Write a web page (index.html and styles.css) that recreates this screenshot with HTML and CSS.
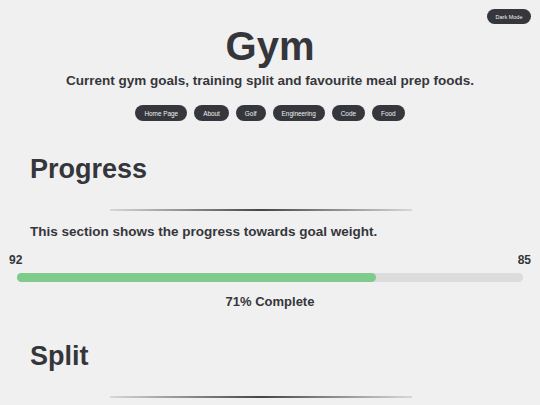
FILE: index.html
```html
<!DOCTYPE html>
<html>
<head>
<meta charset="utf-8">
<link rel="stylesheet" href="styles.css">
</head>
<body>
<div class="topbar"><button class="toggle">Dark Mode</button></div>
<header class="hero">
  <h1 class="title">Gym</h1>
  <p class="subtitle">Current gym goals, training split and favourite meal prep foods.</p>
  <nav class="nav">
    <a class="pill">Home Page</a>
    <a class="pill">About</a>
    <a class="pill">Golf</a>
    <a class="pill">Engineering</a>
    <a class="pill">Code</a>
    <a class="pill">Food</a>
  </nav>
</header>
<section class="section">
  <h2 class="heading">Progress</h2>
  <div class="rule"></div>
  <p class="desc">This section shows the progress towards goal weight.</p>
</section>
<div class="progress">
  <div class="labels"><span>92</span><span>85</span></div>
  <div class="track"><div class="fill" style="width:71%"></div></div>
  <p class="pct">71% Complete</p>
</div>
<section class="section">
  <h2 class="heading split">Split</h2>
  <div class="rule"></div>
</section>
</body>
</html>
```
FILE: styles.css
```css
html, body {
  margin: 0;
  padding: 0;
  background: #f0f0f0;
  color: #35363b;
  font-family: "Liberation Sans", Arial, sans-serif;
}
.topbar {
  display: flex;
  justify-content: flex-end;
  padding: 9px 9px 0 0;
  height: 15px;
}
.toggle {
  height: 15px;
  width: 44px;
  padding: 0;
  border: none;
  border-radius: 8px;
  background: #35373c;
  color: #f0f0f0;
  font-family: "Liberation Sans", Arial, sans-serif;
  font-size: 5.5px;
}
.hero {
  text-align: center;
}
.title {
  margin: 0;
  font-size: 40px;
  line-height: 44px;
  font-weight: bold;
}
.subtitle {
  margin: 5px 0 0;
  font-size: 13.5px;
  line-height: 16px;
  font-weight: bold;
}
.nav {
  display: flex;
  justify-content: center;
  gap: 7px;
  margin-top: 16px;
}
.pill {
  display: flex;
  align-items: center;
  height: 16px;
  padding: 0 9px;
  border-radius: 8px;
  background: #35373c;
  color: #f0f0f0;
  font-size: 6.4px;
}
.section {
  padding-left: 30px;
}
.heading {
  margin: 32px 0 0;
  font-size: 27px;
  line-height: 32px;
  font-weight: bold;
}
.rule {
  margin: 24px 0 0 80px;
  width: 302px;
  height: 2px;
  background: linear-gradient(to right, rgba(40,40,45,0.12), rgba(40,40,45,0.85) 50%, rgba(40,40,45,0.12));
}
.desc {
  margin: 13px 0 0;
  font-size: 13.5px;
  line-height: 16px;
  font-weight: bold;
}
.progress {
  padding: 0 9px;
  margin-top: 13px;
}
.labels {
  display: flex;
  justify-content: space-between;
  font-size: 12px;
  line-height: 14px;
  font-weight: bold;
}
.track {
  margin: 6px 8px 0;
  height: 9px;
  border-radius: 5px;
  background: #dcdcdc;
}
.fill {
  height: 100%;
  border-radius: 5px;
  background: #7ecb8c;
}
.pct {
  margin: 12px 0 0;
  text-align: center;
  font-size: 13px;
  line-height: 16px;
  font-weight: bold;
}
.split {
  margin-top: 30px;
}
```
